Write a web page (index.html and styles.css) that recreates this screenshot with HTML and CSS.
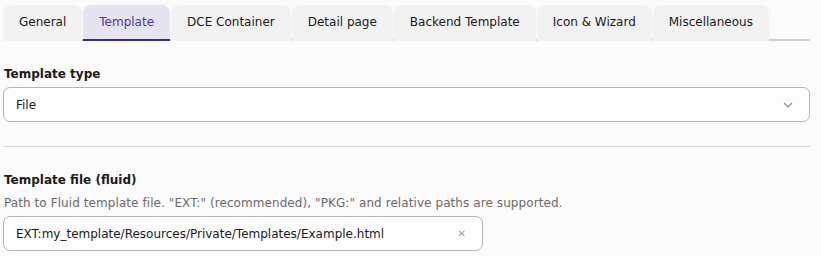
FILE: index.html
```html
<!DOCTYPE html>
<html lang="en">
<head>
  <meta charset="UTF-8">
  <title>DCE - Template</title>
  <link rel="stylesheet" href="styles.css">
</head>
<body>
<div class="editor">
  <ul class="tabs">
    <li class="tab">General</li>
    <li class="tab active">Template</li>
    <li class="tab">DCE Container</li>
    <li class="tab">Detail page</li>
    <li class="tab">Backend Template</li>
    <li class="tab">Icon &amp; Wizard</li>
    <li class="tab">Miscellaneous</li>
  </ul>

  <div class="field">
    <label class="field-label">Template type</label>
    <div class="select">
      <span>File</span>
      <svg class="chevron" width="10" height="6" viewBox="0 0 10 6"><path d="M1 1l4 4 4-4" fill="none" stroke="#8a8a8a" stroke-width="1.2"/></svg>
    </div>
  </div>

  <hr class="divider">

  <div class="field">
    <label class="field-label">Template file (fluid)</label>
    <div class="field-help">Path to Fluid template file. "EXT:" (recommended), "PKG:" and relative paths are supported.</div>
    <div class="input">
      <span>EXT:my_template/Resources/Private/Templates/Example.html</span>
      <span class="clear">&#x2715;</span>
    </div>
  </div>
</div>
</body>
</html>
```

FILE: styles.css
```css
body {
  margin: 0;
  background: #fbfbfb;
  font-family: "DejaVu Sans", Verdana, sans-serif;
  font-size: 12px;
  color: #1a1a1a;
}
.editor {
  padding: 5px 11px 0 3px;
}
.tabs {
  display: flex;
  gap: 1px;
  list-style: none;
  margin: 0;
  padding: 0;
  border-bottom: 2px solid #d0d0d0;
}
.tab {
  background: #f2f2f2;
  padding: 0 16px;
  height: 34px;
  line-height: 34px;
  border-radius: 8px 8px 0 0;
  margin-bottom: -2px;
  border-bottom: 2px solid transparent;
}
.tab.active {
  background: #e6e4f0;
  color: #4a36a8;
  border-bottom-color: #3a2a8c;
}
.field {
  padding-left: 1px;
}
.field-label {
  display: block;
  font-weight: bold;
  margin: 25px 0 5px;
  line-height: 16px;
}
.select,
.input {
  display: flex;
  align-items: center;
  justify-content: space-between;
  height: 33px;
  border: 1px solid #b4b4ba;
  border-radius: 7px;
  background: #fdfdfd;
  padding: 0 12px;
  margin-left: -1px;
}
.chevron {
  margin-right: 4px;
}
.divider {
  border: 0;
  border-top: 1px solid #d6d6d6;
  margin: 24px 0 0;
}
.field-help {
  color: #6b6b6b;
  padding-top: 2px;
  margin-bottom: 5px;
  line-height: 16px;
  letter-spacing: 0.08px;
}
.input {
  width: 454px;
}
.clear {
  color: #a0a0a0;
  font-size: 10px;
  font-weight: bold;
  margin-right: 4px;
}
```
